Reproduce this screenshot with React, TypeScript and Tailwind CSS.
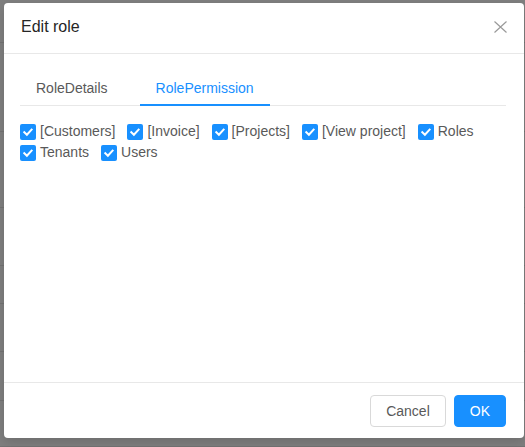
import React from "react";

const perms = ["[Customers]", "[Invoice]", "[Projects]", "[View project]", "Roles", "Tenants", "Users"];

function Check() {
  return (
    <span className="flex h-[16px] w-[16px] items-center justify-center rounded-[2px] bg-[#1890ff]">
      <svg width="16" height="16" viewBox="0 0 16 16">
        <path d="M4.3 8.2 L6.9 10.7 L11.6 5.6" fill="none" stroke="#ffffff" strokeWidth="2" strokeLinecap="square" />
      </svg>
    </span>
  );
}

export default function App() {
  const bgRows = [43, 89, 76, 58, 38, 48, 49, 46];
  return (
    <div className="relative h-[447px] w-[525px] overflow-hidden bg-white font-['Liberation_Sans',Arial,sans-serif] text-[14px]">
      {/* underlying page */}
      <div className="flex flex-col">
        {bgRows.map((h, i) => (
          <div key={i} style={{ height: h }} className="border-b border-[#e6e6e6]" />
        ))}
      </div>
      {/* mask */}
      <div className="absolute inset-0 bg-[rgba(0,0,0,0.5)]" />
      {/* modal */}
      <div className="absolute left-[4px] top-[3px] flex h-[435px] w-[520px] flex-col rounded-[4px] bg-white shadow-[0_4px_12px_rgba(0,0,0,0.15)]">
        <div className="flex h-[51px] items-start justify-between border-b border-[#e8e8e8] pl-[17px] pr-[17px] pt-[13px]">
          <span className="text-[16px] leading-[22px] text-[#262626]">Edit role</span>
          <svg className="mt-[5px]" width="13" height="12" viewBox="0 0 13 12">
            <path d="M0.5 0.5 L12.5 11.5 M12.5 0.5 L0.5 11.5" stroke="#9a9a9a" strokeWidth="1.2" fill="none" />
          </svg>
        </div>
        <div className="flex-1 pl-[16px] pr-[18px] pt-[16px]">
          <div className="flex gap-[16px] border-b border-[#e8e8e8]">
            <div className="px-[16px] pb-[6px] pt-[8px] leading-[21px] text-[#595959]">RoleDetails</div>
            <div className="relative px-[16px] pb-[6px] pt-[8px] leading-[21px] text-[#1890ff]">
              RolePermission
              <div className="absolute bottom-[-1px] left-0 right-0 h-[2px] bg-[#1890ff]" />
            </div>
          </div>
          <div className="mt-[15px] flex flex-wrap">
            {perms.map((p) => (
              <div key={p} className="mr-[12px] flex h-[21px] items-center">
                <Check />
                <span className="ml-[4px] leading-[21px] text-[#595959]">{p}</span>
              </div>
            ))}
          </div>
        </div>
        <div className="flex h-[56px] items-start justify-end gap-[8px] border-t border-[#e8e8e8] pr-[18px] pt-[12px]">
          <button className="h-[32px] rounded-[4px] border border-[#d9d9d9] bg-white px-[15px] text-[14px] text-[#595959]">Cancel</button>
          <button className="h-[32px] rounded-[4px] border border-[#1890ff] bg-[#1890ff] px-[15px] text-[14px] text-white">OK</button>
        </div>
      </div>
    </div>
  );
}
